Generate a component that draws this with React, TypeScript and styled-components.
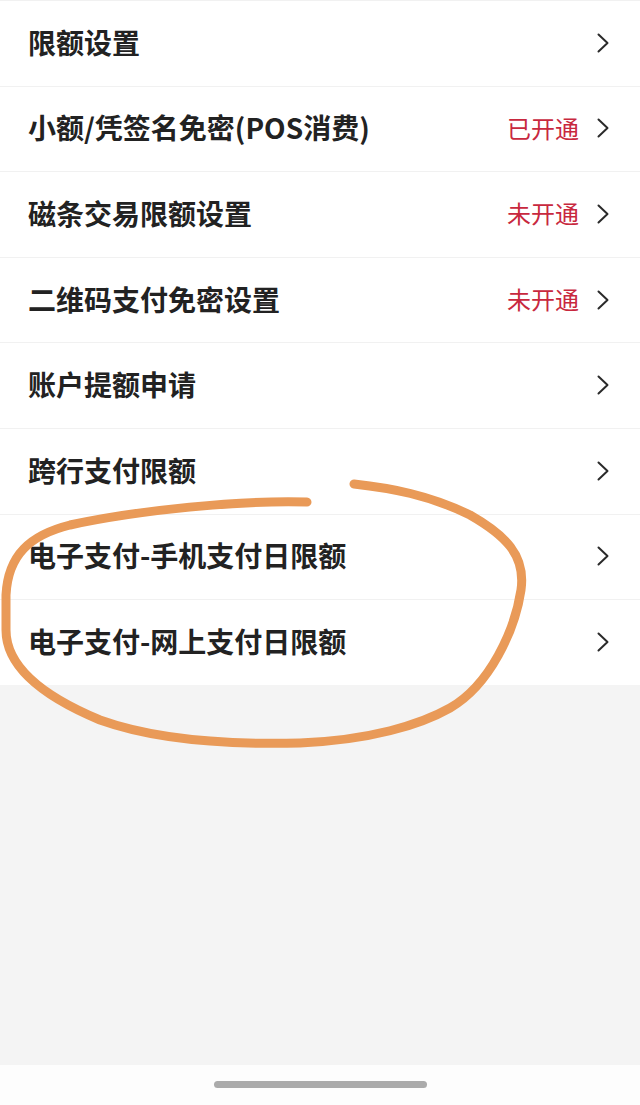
import React from "react";
import styled, { createGlobalStyle } from "styled-components";

const GlobalStyle = createGlobalStyle`
  html, body {
    margin: 0;
    padding: 0;
    background: #ffffff;
  }
  * { box-sizing: border-box; }
`;

const Page = styled.div`
  position: relative;
  width: 640px;
  height: 1105px;
  display: flex;
  flex-direction: column;
  background: #f4f4f4;
  font-family: "Noto Sans CJK SC", "Noto Sans", sans-serif;
  overflow: hidden;
`;

const List = styled.div`
  background: #ffffff;
  display: flex;
  flex-direction: column;
`;

const Row = styled.div`
  height: 85.6px;
  display: flex;
  align-items: center;
  padding: 0 31px 3px 28px;
  border-top: 1px solid #f1f1f1;
`;

const Title = styled.span`
  flex: 1;
  font-size: 28px;
  font-weight: 700;
  color: #222222;
  white-space: nowrap;
`;

const Status = styled.span`
  font-size: 24px;
  font-weight: 400;
  color: #c8283e;
  margin-right: 18px;
`;

const Chevron = styled.svg`
  width: 12px;
  height: 20px;
  flex: none;
  margin-top: 2px;
`;

const Filler = styled.div`
  flex: 1;
`;

const HomeBar = styled.div`
  height: 40px;
  background: #fdfdfd;
  display: flex;
  justify-content: center;
  padding-top: 16px;
`;

const Indicator = styled.div`
  width: 213px;
  height: 7px;
  border-radius: 4px;
  background: #ababab;
`;

const Annotation = styled.svg`
  position: absolute;
  left: 0;
  top: 0;
  width: 640px;
  height: 1105px;
  pointer-events: none;
`;

const items: { title: string; status?: string }[] = [
  { title: "限额设置" },
  { title: "小额/凭签名免密(POS消费)", status: "已开通" },
  { title: "磁条交易限额设置", status: "未开通" },
  { title: "二维码支付免密设置", status: "未开通" },
  { title: "账户提额申请" },
  { title: "跨行支付限额" },
  { title: "电子支付-手机支付日限额" },
  { title: "电子支付-网上支付日限额" },
];

export default function App() {
  return (
    <>
      <GlobalStyle />
      <Page>
        <List>
          {items.map((it) => (
            <Row key={it.title}>
              <Title>{it.title}</Title>
              {it.status && <Status>{it.status}</Status>}
              <Chevron viewBox="0 0 12 20">
                <polyline
                  points="1.5,1.5 10.5,10 1.5,18.5"
                  fill="none"
                  stroke="#2a2a2a"
                  strokeWidth="2"
                  strokeLinecap="round"
                  strokeLinejoin="round"
                />
              </Chevron>
            </Row>
          ))}
        </List>
        <Filler />
        <HomeBar>
          <Indicator />
        </HomeBar>
        <Annotation viewBox="0 0 640 1105">
          <path
            d="M307,502 C240,500 140,510 70,525 C30,535 8,555 6,595 L6,630 C6,665 40,695 100,720 C150,738 220,745 300,743 C370,740 420,725 450,708 C490,685 515,630 521,590 C526,555 505,535 470,515 C430,495 390,488 354,484"
            fill="none"
            stroke="#e99a58"
            strokeWidth="9"
            strokeLinecap="round"
            strokeLinejoin="round"
          />
        </Annotation>
      </Page>
    </>
  );
}
